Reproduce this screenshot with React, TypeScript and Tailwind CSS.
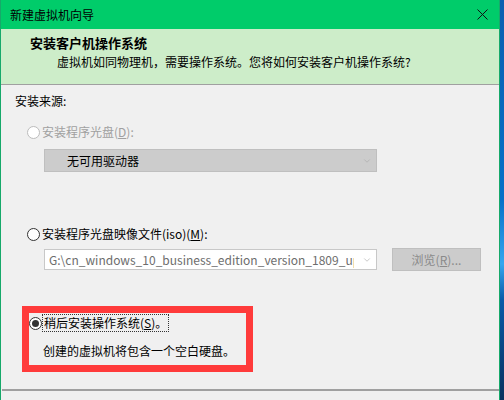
import { ChevronDown } from "lucide-react"

const font = { fontFamily: '"Noto Sans CJK SC", "Noto Sans", sans-serif' }

function Radio({ checked = false, disabled = false }: { checked?: boolean; disabled?: boolean }) {
  return (
    <span
      className={
        "grid size-[13px] shrink-0 place-items-center rounded-full border bg-white " +
        (disabled ? "border-[#bcbcbc]" : "border-[#333333]")
      }
    >
      {checked && <span className="size-[7px] rounded-full bg-[#333333]" />}
    </span>
  )
}

export default function App() {
  return (
    <div className="flex h-[400px] w-[504px] overflow-hidden text-[12px] leading-[16px] text-black" style={font}>
      <div className="flex w-[500px] flex-col border-x border-[#16a96a] bg-[#f0f0f0]">
        <div className="flex h-[29px] shrink-0 items-center justify-between bg-[#00cc6a] pl-[9px] pr-[10px]">
          <span>新建虚拟机向导</span>
          <svg width="11" height="11" viewBox="0 0 11 11" className="mr-[1px]">
            <path d="M0.5 0.5 L10.5 10.5 M10.5 0.5 L0.5 10.5" stroke="#111" strokeWidth="1" />
          </svg>
        </div>

        <div className="h-[56px] shrink-0 border-b border-[#a0a0a0] bg-[#cdedc9] pl-[29px] pt-[6px]">
          <p className="text-[13px] font-bold">安装客户机操作系统</p>
          <p className="mt-[3px] pl-[27px]">虚拟机如同物理机，需要操作系统。您将如何安装客户机操作系统?</p>
        </div>

        <div className="flex flex-1 flex-col pl-[14px] pt-[8px]">
          <p>安装来源:</p>

          <div className="mt-[15px] flex items-center gap-[2px] pl-[12px] text-[#a0a0a0]">
            <Radio disabled />
            <span>安装程序光盘(<span className="underline">D</span>):</span>
          </div>
          <div className="ml-[29px] mt-[9px] flex h-[23px] w-[333px] items-center justify-between border border-[#bfbfbf] bg-[#cccccc] pl-[22px] pr-[4px]">
            <span>无可用驱动器</span>
            <ChevronDown className="size-[10px] text-[#a8a8a8]" strokeWidth={1.5} />
          </div>

          <div className="mt-[54px] flex items-center gap-[2px] pl-[12px]">
            <Radio />
            <span>安装程序光盘映像文件(iso)(<span className="underline">M</span>):</span>
          </div>
          <div className="ml-[29px] mt-[6px] flex items-center gap-[15px]">
            <div className="flex h-[21px] w-[333px] items-center border border-[#c8c8c8] bg-white pl-[4px] pr-[4px]">
              <span className="flex-1 overflow-hidden whitespace-nowrap text-[#6d6d6d]">
                G:\cn_windows_10_business_edition_version_1809_updated_sept_2018_x64_dvd.iso
              </span>
              <ChevronDown className="ml-[8px] size-[10px] shrink-0 text-[#a8a8a8]" strokeWidth={1.5} />
            </div>
            <div className="grid h-[23px] w-[89px] place-items-center border border-[#bfbfbf] bg-[#cccccc] text-[#8a8a8a]">
              <span>浏览(<span className="underline">R</span>)...</span>
            </div>
          </div>

          <div className="ml-[7px] mt-[35px] h-[66px] w-[231px] border-[7px] border-[#ff3b3b] pl-[0px]">
            <div className="mt-[1px] flex items-center gap-[0px]">
              <Radio checked />
              <span className="border border-dotted border-[#333] px-[1px] leading-[16px]">稍后安装操作系统(<span className="underline">S</span>)。</span>
            </div>
            <p className="mt-[11px] pl-[14px]">创建的虚拟机将包含一个空白硬盘。</p>
          </div>

          <div className="-ml-[13px] mt-[17px] h-[2px] w-[497px] bg-[#a0a0a0]" />
        </div>
      </div>
      <div className="w-[4px] bg-[linear-gradient(to_bottom,#0a5fb0_0%,#0870c8_50%,#36a6ef_66%,#0a5aa8_75%,#0b2f5e_100%)]" />
    </div>
  )
}
